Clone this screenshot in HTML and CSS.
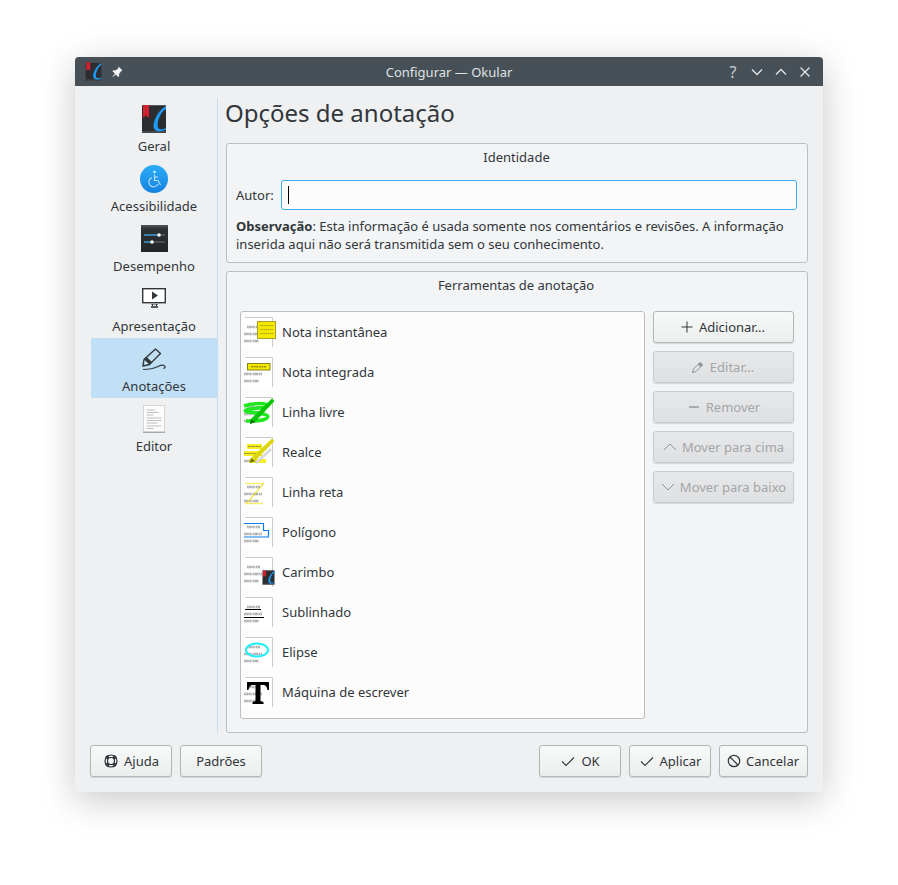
FILE: index.html
```html
<!DOCTYPE html>
<html lang="pt-BR">
<head>
<meta charset="utf-8">
<title>Configurar — Okular</title>
<link rel="stylesheet" href="styles.css">
</head>
<body>
<svg class="defs" width="0" height="0" aria-hidden="true">
  <defs>
    <symbol id="okular" viewBox="0 0 32 32">
      <rect x="4" y="2" width="24" height="28" fill="#2b2d30"/>
      <rect x="4" y="2" width="24" height="1" fill="#55585b"/>
      <rect x="4" y="28" width="24" height="2" fill="#45484b"/>
      <path d="M5 2h6v13l-3-2.500L5 15z" fill="#d3202f"/>
      <path d="M28 3C21 7 15.500 16 15.500 23c0 4 3 6 8 5 2-.4 3.500-1 4.500-1.500V25c-3 1.500-7 2-8-.5C18.500 20 22 9 28 6z" fill="#1d99f3"/>
    </symbol>
    <symbol id="page" viewBox="0 0 32 32">
      <rect x="2" y="1" width="28.500" height="30" fill="#fff"/>
      <path d="M3 1.500h27.500V31" fill="none" stroke="#c9cbcd"/>
      <g fill="none" stroke="#d2d3d4" stroke-width="3.200" stroke-dasharray="4 .8 3 1 5 .6">
        <path d="M5 11h13"/>
        <path d="M2 18h18"/>
        <path d="M2 25h15"/>
      </g>
      <g fill="none" stroke="#8b8d8f" stroke-width="1.100" stroke-dasharray="1.500 1 3 .8 1 1.200">
        <path d="M5 11h13"/>
        <path d="M2 18h18"/>
        <path d="M2 25h15"/>
      </g>
    </symbol>
  </defs>
</svg>

<div class="window">
  <header class="titlebar">
    <div class="tb-left">
      <svg class="tb-app" width="21" height="21"><use href="#okular"/></svg>
      <svg class="tb-pin" width="14" height="14" viewBox="0 0 14 14"><path d="M8.500 1.500l4 4-1.200.6-2.300 3 .2 2.200-1 .7-2.300-2.400L2 12.500l2.900-3.900L2.500 6.300l.7-1 2.200.2 3-2.300z" fill="#f4f5f6"/></svg>
    </div>
    <div class="tb-title">Configurar — Okular</div>
    <div class="tb-right">
      <span class="tb-help">?</span>
      <svg width="14" height="14" viewBox="0 0 14 14"><path d="M2 4.500l5 5 5-5" fill="none" stroke="#e3e5e7" stroke-width="1.300"/></svg>
      <svg width="14" height="14" viewBox="0 0 14 14"><path d="M2 9.500l5-5 5 5" fill="none" stroke="#e3e5e7" stroke-width="1.300"/></svg>
      <svg width="14" height="14" viewBox="0 0 14 14"><path d="M2.500 2.500l9 9M11.500 2.500l-9 9" fill="none" stroke="#e3e5e7" stroke-width="1.300"/></svg>
    </div>
  </header>

  <div class="content">
    <div class="columns">
      <nav class="sidebar">
        <div class="nav-item">
          <svg width="32" height="32"><use href="#okular"/></svg>
          <span>Geral</span>
        </div>
        <div class="nav-item">
          <svg width="32" height="32" viewBox="0 0 32 32">
            <defs><linearGradient id="ac" x1="0" y1="0" x2="0" y2="1"><stop offset="0" stop-color="#2bacf8"/><stop offset="1" stop-color="#1583e0"/></linearGradient></defs>
            <circle cx="16" cy="16" r="14" fill="url(#ac)"/>
            <circle cx="16.500" cy="9" r="1.300" fill="#cfe8fb"/>
            <path d="M16.500 11.500v6h3.500l2.500 4.500M14 14.500a4.800 4.800 0 1 0 6 6.500" fill="none" stroke="#bfe0f9" stroke-width="1.100"/>
            <path d="M16.500 14h3.500" stroke="#bfe0f9" stroke-width="1.100"/>
          </svg>
          <span>Acessibilidade</span>
        </div>
        <div class="nav-item">
          <svg width="32" height="32" viewBox="0 0 32 32">
            <defs><linearGradient id="pf" x1="0" y1="0" x2="0" y2="1"><stop offset="0" stop-color="#55585b"/><stop offset=".15" stop-color="#2e3033"/><stop offset="1" stop-color="#232528"/></linearGradient></defs>
            <rect x="3" y="2" width="27" height="27" fill="url(#pf)"/>
            <path d="M6 12h13" stroke="#3daee9" stroke-width="1.300"/><path d="M19 12h8" stroke="#60656a" stroke-width="1.300"/>
            <path d="M6 19h8" stroke="#3daee9" stroke-width="1.300"/><path d="M14 19h13" stroke="#60656a" stroke-width="1.300"/>
            <circle cx="21" cy="12" r="1.800" fill="#fff"/><circle cx="14" cy="19" r="1.800" fill="#fff"/>
          </svg>
          <span>Desempenho</span>
        </div>
        <div class="nav-item">
          <svg width="32" height="32" viewBox="0 0 32 32">
            <rect x="4.700" y="5.700" width="22.600" height="14" fill="#fff" stroke="#31363b" stroke-width="1.400"/>
            <path d="M14 8.500l6 4-6 4z" fill="#31363b"/>
            <path d="M13 21.500h7" stroke="#8d9093" stroke-width="1"/>
            <path d="M13 24h7" stroke="#31363b" stroke-width="1.600"/>
            <path d="M14.500 21v2M18.500 21v2" stroke="#31363b"/>
          </svg>
          <span>Apresentação</span>
        </div>
        <div class="nav-item active">
          <svg width="32" height="32" viewBox="0 0 32 32">
            <path d="M6 16.500L17.500 6l5 4.500-11 11-6.500 1.500z" fill="none" stroke="#31363b" stroke-width="1.400" stroke-linejoin="round"/>
            <path d="M6 16.500l5.500 5L14 19l-5.500-5z" fill="#31363b"/>
            <path d="M5 26.500c6 0 11-1 15-3 3-1.500 6-2 7 0 .4 1-.5 2-1.500 1.500" fill="none" stroke="#31363b" stroke-width="1.200"/>
          </svg>
          <span>Anotações</span>
        </div>
        <div class="nav-item">
          <svg width="32" height="32" viewBox="0 0 32 32">
            <rect x="5.500" y="2.500" width="21" height="27" fill="#fcfcfc" stroke="#d4d5d6"/>
            <rect x="5" y="28.500" width="22" height="1.500" fill="#a9abad"/>
            <g stroke="#bcbec0"><path d="M8.500 7h9M8.500 9.500h12M8.500 12h7M8.500 15h15M8.500 17.500h15M8.500 20h11M8.500 23h15M8.500 25.500h7"/></g>
          </svg>
          <span>Editor</span>
        </div>
      </nav>

      <main class="main">
        <h1 class="heading">Opções de anotação</h1>

        <section class="group group-id">
          <div class="group-title">Identidade</div>
          <div class="author-row">
            <label class="author-label">Autor:</label>
            <div class="input"><span class="caret"></span></div>
          </div>
          <p class="note">
            <span class="note-line"><b>Observação</b>: Esta informação é usada somente nos comentários e revisões. A informação</span>
            <span class="note-line">inserida aqui não será transmitida sem o seu conhecimento.</span>
          </p>
        </section>

        <section class="group group-tools">
          <div class="group-title">Ferramentas de anotação</div>
          <div class="tools-body">
            <ul class="tool-list">
              <li class="tool">
                <svg width="32" height="32" viewBox="0 0 32 32"><use href="#page"/><rect x="15.500" y="5.500" width="18" height="17" fill="#f5e800" stroke="#a7a02a"/><g stroke="#8f8a20" stroke-width=".7" stroke-dasharray="1.500 .5"><path d="M18 9.500h13M18 13.500h13M18 17.500h13"/></g></svg>
                <span>Nota instantânea</span>
              </li>
              <li class="tool">
                <svg width="32" height="32" viewBox="0 0 32 32"><use href="#page"/><rect x="5.500" y="7.500" width="22.500" height="6.500" fill="#f5e800" stroke="#8a861c"/><path d="M9 10.800h15" stroke="#6d6a18" stroke-dasharray="2 .6"/></svg>
                <span>Nota integrada</span>
              </li>
              <li class="tool">
                <svg width="32" height="32" viewBox="0 0 32 32"><use href="#page"/><path d="M2 10c8-3 18-3 24-1 0 3-18 3-22 5-3 2 4 2 12 3 6 1 12 2 9 5-3 3-10 3-21 3" fill="none" stroke="#1ee81e" stroke-width="3.500"/><path d="M30 2.500l2.500 2.500L13 26l-5 2 1-5z" fill="#07c507"/><path d="M9 23l4 3-5 2z" fill="#0a7a0a"/></svg>
                <span>Linha livre</span>
              </li>
              <li class="tool">
                <svg width="32" height="32" viewBox="0 0 32 32"><use href="#page"/><g fill="#f5ee20"><rect x="5" y="8" width="15" height="5"/><rect x="2" y="15" width="18" height="5"/><rect x="7" y="23" width="17" height="4"/></g><path d="M6 10.500h13M2 17.500h16M7 25h10" stroke="#8f8a30" stroke-dasharray="2 .7" stroke-width="1.200"/><path d="M14 27l15-14" stroke="#d8d9da" stroke-width="3"/><path d="M30 2.500l2.500 2.500L13 25l-5 2 1-5z" fill="#dcd70b"/><path d="M9 22l4 3-5 2z" fill="#77730a"/></svg>
                <span>Realce</span>
              </li>
              <li class="tool">
                <svg width="32" height="32" viewBox="0 0 32 32"><use href="#page"/><path d="M3 7.500h18M3 27.500h18" stroke="#f7ee70" stroke-width="1.500"/><path d="M5 27L22 7" stroke="#eedc14" stroke-width="1.100"/></svg>
                <span>Linha reta</span>
              </li>
              <li class="tool">
                <svg width="32" height="32" viewBox="0 0 32 32"><use href="#page"/><path d="M2 7.500h19.500v7H26.500v6.500H2" fill="none" stroke="#0a7cf0" stroke-width="1.200"/></svg>
                <span>Polígono</span>
              </li>
              <li class="tool">
                <svg width="32" height="32" viewBox="0 0 32 32"><use href="#page"/><svg x="18.500" y="13.500" width="16" height="16"><use href="#okular"/></svg></svg>
                <span>Carimbo</span>
              </li>
              <li class="tool">
                <svg width="32" height="32" viewBox="0 0 32 32"><use href="#page"/><path d="M3 13.500h16M2 21.500h20" stroke="#000" stroke-width="1.100"/></svg>
                <span>Sublinhado</span>
              </li>
              <li class="tool">
                <svg width="32" height="32" viewBox="0 0 32 32"><use href="#page"/><ellipse cx="15" cy="14" rx="11" ry="6.500" fill="none" stroke="#1ff0f5" stroke-width="2"/></svg>
                <span>Elipse</span>
              </li>
              <li class="tool">
                <svg width="32" height="32" viewBox="0 0 32 32"><use href="#page"/><path d="M5 6h22v8h-1.500c-.5-3-1.500-5-5-5H18.500v16l3 1v2H10.500v-2l3-1V9h-2c-3.500 0-4.500 2-5 5H5z" fill="#000"/></svg>
                <span>Máquina de escrever</span>
              </li>
            </ul>
            <div class="tool-actions">
              <button class="btn nudge" type="button">
                <svg width="14" height="14" viewBox="0 0 14 14"><path d="M7 1.500v11M1.500 7h11" stroke="#31363b" stroke-width="1"/></svg>
                Adicionar...
              </button>
              <button class="btn disabled nudge" type="button">
                <svg width="14" height="14" viewBox="0 0 14 14"><path d="M1.500 12.500l1-3.500 6.500-6.500 2.500 2.500-6.500 6.500z" fill="none" stroke="#8f9295"/><path d="M7 4.500L9.500 7 11.800 4.700 9.300 2.200z" fill="#8f9295"/></svg>
                Editar...
              </button>
              <button class="btn disabled" type="button">
                <svg width="14" height="14" viewBox="0 0 14 14"><path d="M2 7h10" stroke="#8f9295" stroke-width="1.400"/></svg>
                Remover
              </button>
              <button class="btn disabled" type="button">
                <svg width="14" height="14" viewBox="0 0 14 14"><path d="M1 10l6-6 6 6" fill="none" stroke="#8f9295"/></svg>
                Mover para cima
              </button>
              <button class="btn disabled" type="button">
                <svg width="14" height="14" viewBox="0 0 14 14"><path d="M1 4l6 6 6-6" fill="none" stroke="#8f9295"/></svg>
                Mover para baixo
              </button>
            </div>
          </div>
        </section>
      </main>
    </div>

    <footer class="footer">
      <div class="footer-group">
        <button class="btn wide" type="button">
          <svg width="16" height="16" viewBox="0 0 16 16"><circle cx="8" cy="8" r="3.500" fill="none" stroke="#31363b" stroke-width="1.200"/><circle cx="8" cy="8" r="6" fill="none" stroke="#31363b" stroke-width="1.200"/><path d="M3.200 3.200l2.300 2.300M12.800 3.200l-2.300 2.300M3.200 12.800l2.300-2.300M12.800 12.800l-2.300-2.300" stroke="#31363b" stroke-width="3.200"/></svg>
          Ajuda
        </button>
        <button class="btn wide" type="button">Padrões</button>
      </div>
      <div class="footer-group">
        <button class="btn wide" type="button">
          <svg width="16" height="16" viewBox="0 0 16 16"><path d="M2 8.500l4 4 8-8" fill="none" stroke="#31363b" stroke-width="1.100"/></svg>
          OK
        </button>
        <button class="btn wide" type="button">
          <svg width="16" height="16" viewBox="0 0 16 16"><path d="M2 8.500l4 4 8-8" fill="none" stroke="#31363b" stroke-width="1.100"/></svg>
          Aplicar
        </button>
        <button class="btn cancel" type="button">
          <svg width="14" height="14" viewBox="0 0 14 14"><circle cx="7" cy="7" r="5.700" fill="none" stroke="#31363b" stroke-width="1.200"/><path d="M3 3l8 8" stroke="#31363b" stroke-width="1.200"/></svg>
          Cancelar
        </button>
      </div>
    </footer>
  </div>
</div>
</body>
</html>
```

FILE: styles.css
```css
* { box-sizing: border-box; }
html, body { margin: 0; height: 100%; }
body {
  background: #fff;
  font-family: "Noto Sans", sans-serif;
  font-size: 13px;
  line-height: 18px;
  color: #31363b;
  padding: 57px 75px 0;
  overflow: hidden;
}
.defs { position: absolute; }
svg { display: block; flex: none; }
svg svg { display: inline; }

.window {
  width: 748px;
  height: 735px;
  background: #eff0f1;
  border-radius: 4px;
  box-shadow: 0 8px 36px rgba(0, 0, 0, .22);
  display: flex;
  flex-direction: column;
}

.titlebar {
  height: 29px;
  flex: none;
  background: #475057;
  border-radius: 4px 4px 0 0;
  color: #dfe2e4;
  display: grid;
  grid-template-columns: 1fr auto 1fr;
  align-items: center;
  padding: 0 8px;
}
.tb-left { display: flex; align-items: center; gap: 6px; }
.tb-right { display: flex; align-items: center; justify-content: flex-end; gap: 10px; margin-right: 3px; }
.tb-help { width: 14px; text-align: center; font-size: 16px; color: #c9cdd0; }

.content {
  flex: 1;
  min-height: 0;
  display: flex;
  flex-direction: column;
  padding: 12px 15px 15px 16px;
}
.columns { flex: 1; min-height: 0; display: flex; }

.sidebar {
  width: 127px;
  flex: none;
  border-right: 1px solid #bfe0f6;
}
.nav-item {
  height: 60px;
  width: 126px;
  display: flex;
  flex-direction: column;
  align-items: center;
  padding-top: 5px;
  gap: 2px;
}
.nav-item.active { background: #c2e0f5; }

.main {
  flex: 1;
  min-width: 0;
  padding-left: 7px;
  display: flex;
  flex-direction: column;
}
.heading {
  margin: 0 0 16px;
  font-size: 24px;
  font-weight: 400;
  line-height: 29px;
  height: 29px;
  white-space: nowrap;
}

.group {
  margin-left: 1px;
  background: #f3f4f5;
  border: 1px solid #bcbebf;
  border-radius: 3px;
}
.group-title { text-align: center; height: 18px; margin-top: 4px; padding-right: 2px; }
.group-id { height: 120px; flex: none; padding: 0 10px 0 9px; margin-bottom: 8px; }
.group-id .group-title { margin-bottom: 14px; padding-right: 0; }
.group-tools { flex: 1; min-height: 0; padding: 0 13px 13px; display: flex; flex-direction: column; }

.author-row { display: flex; align-items: center; gap: 7px; height: 30px; }
.input {
  flex: 1;
  height: 30px;
  background: #fcfcfc;
  border: 1px solid #3daee9;
  border-radius: 3px;
  padding: 5px 6px;
}
.caret { display: block; width: 1px; height: 18px; background: #000; }
.note { margin: 7px 0 0; }
.note-line { display: block; white-space: nowrap; }

.tools-body { flex: 1; min-height: 0; display: flex; gap: 8px; margin-top: 17px; }
.tool-list {
  list-style: none;
  margin: 0;
  padding: 0 0 0 1px;
  width: 405px;
  height: 408px;
  flex: none;
  background: #fcfcfc;
  border: 1px solid #bcbebf;
  border-radius: 3px;
}
.tool {
  height: 40px;
  display: flex;
  align-items: center;
  gap: 8px;
}
.tool svg { overflow: visible; }

.tool-actions { width: 142px; display: flex; flex-direction: column; gap: 8px; }

.btn {
  height: 32px;
  display: flex;
  align-items: center;
  justify-content: center;
  gap: 5px;
  padding: 0;
  font: inherit;
  color: #31363b;
  background: linear-gradient(#f8f9f9, #eceded);
  border: 1px solid #b4b6b8;
  border-radius: 3px;
  box-shadow: 0 1px 1px rgba(0, 0, 0, .12);
  white-space: nowrap;
}
.btn.nudge { padding-right: 2px; }
.btn.disabled {
  color: #a3a5a7;
  background: linear-gradient(#e7e8e9, #dfe0e2);
  border-color: #c9cbcc;
}
.btn.wide { width: 82px; }
.btn.cancel { width: 89px; padding-right: 1px; }

.footer {
  flex: none;
  display: flex;
  justify-content: space-between;
  margin: 12px 0 0 -1px;
}
.footer-group { display: flex; gap: 8px; }
```
